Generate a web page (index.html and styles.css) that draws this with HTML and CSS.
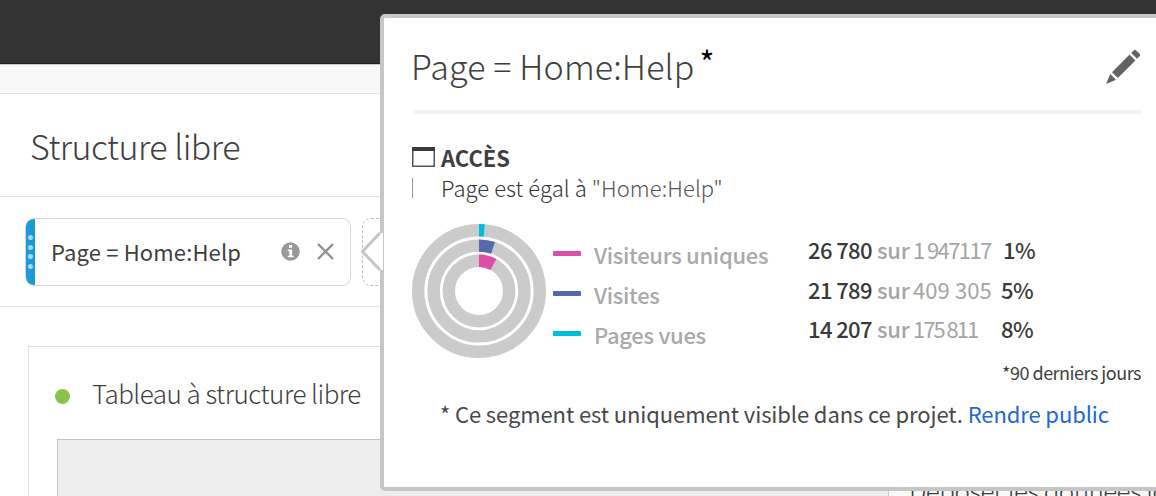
FILE: index.html
```html
<!DOCTYPE html>
<html lang="fr">
<head>
<meta charset="utf-8">
<title>Structure libre</title>
<link rel="stylesheet" href="styles.css">
</head>
<body>
<main class="page">
  <div class="topbar"></div>
  <div class="toolbar"></div>
  <header class="section-header"><h1 class="section-title">Structure libre</h1></header>
  <div class="segments">
    <div class="chip">
      <span class="chip-handle"><i></i><i></i><i></i><i></i></span>
      <span class="chip-label">Page = Home:Help</span>
      <svg class="chip-info" width="19" height="19" viewBox="0 0 19 19"><circle cx="9.5" cy="9.5" r="9.2" fill="#999"/><path d="M8 3h3.2v2.7H8zM6.7 7.4h4.5v6.3h1.5v1.6H6.7v-1.6h1.6V9H6.7z" fill="#fff"/></svg>
      <svg class="chip-close" width="17" height="17" viewBox="0 0 17 17"><path d="M1 1l15 15M16 1L1 16" stroke="#919191" stroke-width="2.4" fill="none"/></svg>
    </div>
    <div class="dropzone"></div>
  </div>
  <section class="panel">
    <div class="panel-head"><span class="status"></span><h2 class="panel-title">Tableau à structure libre</h2></div>
    <div class="table">
      <div class="table-corner"></div>
      <div class="table-drop">Déposer les données ici</div>
    </div>
  </section>

  <aside class="popover">
    <svg class="pointer" width="23" height="40" viewBox="0 0 23 40"><path d="M19 1L1.5 19.5 19 38h4V1z" fill="#fff"/><path d="M20 1L2.5 19.5 20 38" fill="none" stroke="#c6c6c6" stroke-width="3"/></svg>
    <div class="pop-head">
      <h3 class="pop-title">Page = Home:Help<sup class="star">*</sup></h3>
      <svg class="pencil" width="36" height="36" viewBox="0 0 36 36" fill="#636363"><path d="M1 35l4.3-10.1 5.8 5.8z"/><path d="M7 23.2L24.6 5.6l5.8 5.8L12.8 29z"/><path d="M26.2 4L29 1.2q1-1 2 0L34.8 5q1 1 0 2L32 9.8z"/></svg>
    </div>
    <div class="rule-head">
      <svg width="23" height="20" viewBox="0 0 23 20"><path d="M.75 2v17.2h21.5V2" fill="none" stroke="#555" stroke-width="1.5"/><path d="M0 0h23v4H0z" fill="#3b3b3b"/></svg>
      <span class="rule-name">ACCÈS</span>
    </div>
    <div class="rule-body"><span>Page est égal à <span class="value">"Home:Help"</span></span></div>
    <div class="stats">
      <svg class="rings" width="134" height="134" viewBox="-67 -67 134 134" fill="none" stroke-width="12.4">
        <g stroke="#cbcbcb"><circle r="60.8"/><circle r="45.4"/><circle r="30.2"/></g>
        <path d="M0-60.8A60.8 60.8 0 0 1 5.3-60.57" stroke="#00bedb"/>
        <path d="M0-45.4A45.4 45.4 0 0 1 14-43.2" stroke="#5569ad"/>
        <path d="M0-30.2A30.2 30.2 0 0 1 14.4-26.5" stroke="#dc4fa4"/>
      </svg>
      <div class="legend">
        <div class="item"><i class="swatch pink"></i><span>Visiteurs uniques</span></div>
        <div class="item"><i class="swatch blue"></i><span>Visites</span></div>
        <div class="item"><i class="swatch cyan"></i><span>Pages vues</span></div>
      </div>
      <div class="figures">
        <div class="figure"><b>26 780</b><span class="of">sur</span><span class="total tight">1 947117</span><b class="pct">1%</b></div>
        <div class="figure"><b>21 789</b><span class="of">sur</span><span class="total">409 305</span><b class="pct low">5%</b></div>
        <div class="figure"><b>14 207</b><span class="of">sur</span><span class="total snug">175 811</span><b class="pct low">8%</b></div>
      </div>
    </div>
    <div class="period">*90 derniers jours</div>
    <p class="notice"><span class="notice-text">* Ce segment est uniquement visible dans ce projet.</span><a class="link">Rendre public</a></p>
  </aside>
</main>
</body>
</html>
```
FILE: styles.css
```css
* { box-sizing: border-box; }
body { margin: 0; font-family: "Noto Sans CJK SC", "Noto Sans", sans-serif; color: #3f3f3f; background: #fff; }
h1, h2, h3, p { margin: 0; }
.page { position: relative; width: 1156px; height: 496px; overflow: hidden; display: flex; flex-direction: column; }
.page > * { flex-shrink: 0; }
.topbar { height: 64px; background: #333; border-bottom: 1px solid #222; }
.toolbar { height: 30px; background: #f8f8f8; border-top: 1px solid #c8c8c8; border-bottom: 1px solid #e0e0e0; }
.section-header { height: 103px; padding: 32px 30px 0; border-bottom: 1px solid #e3e3e3; }
.section-title { font-size: 34px; font-weight: 300; line-height: 40px; letter-spacing: -0.52px; }

.segments { height: 110px; padding: 21px 25px 0; display: flex; gap: 11px; border-bottom: 1px solid #e6e6e6; }
.chip { width: 326px; height: 68px; border: 1px solid #d5d5d5; border-radius: 9px; display: flex; align-items: center; overflow: hidden; }
.chip-handle { width: 9px; height: 68px; background: #1a9bd7; display: flex; flex-direction: column; align-items: center; justify-content: center; gap: 4.5px; }
.chip-handle i { width: 5px; height: 5px; border-radius: 50%; background: #a5d9f3; }
.chip-label { width: 229px; padding-left: 16px; margin-bottom: 3px; font-size: 22px; line-height: 30px; letter-spacing: 0.15px; white-space: nowrap; }
.chip-info { margin-left: 17px; margin-bottom: 2px; }
.chip-close { margin-left: 17px; margin-bottom: 2px; }
.dropzone { width: 60px; height: 68px; border: 1px dashed #bdbdbd; border-radius: 9px; }

.panel { margin: 39px 0 0 28px; height: 180px; border: 1px solid #dfdfdf; border-right: 0; }
.panel-head { height: 92px; padding: 3px 0 0 26px; display: flex; align-items: center; gap: 22px; }
.status { width: 15px; height: 15px; border-radius: 50%; background: #8bc34a; margin-top: 4px; }
.panel-title { margin-bottom: 4px; font-size: 26px; font-weight: 300; line-height: 36px; letter-spacing: -0.52px; white-space: nowrap; }
.table { margin-left: 28px; height: 80px; display: flex; border: 1px solid #c4c4c4; background: #ededed; }
.table-corner { width: 831px; flex-shrink: 0; border-right: 1px solid #ccc; }
.table-drop { flex: 1; padding: 32px 0 0 20px; background: #f9f9f9; font-size: 26px; font-weight: 300; line-height: 36px; letter-spacing: -0.6px; white-space: nowrap; }

.popover { position: absolute; left: 380px; top: 14px; width: 790px; height: 477px; padding: 0 0 0 28px; background: #fff; border: 4px solid #c6c6c6; border-radius: 5px; }
.pointer { position: absolute; left: -24px; top: 214px; }
.pop-head { width: 727px; height: 96px; border-bottom: 4px solid #f2f2f2; padding-top: 24px; display: flex; justify-content: space-between; margin-left: 2px; }
.pop-title { margin-left: -3px; font-size: 34px; font-weight: 300; line-height: 48px; letter-spacing: 0.15px; white-space: nowrap; display: flex; }
.star { font-size: 32px; font-weight: 400; color: #000; line-height: 38px; margin-left: 5px; }
.pencil { margin-top: 7px; }
.rule-head { margin-top: 28px; height: 30px; display: flex; align-items: center; gap: 6px; }
.rule-name { font-size: 22px; font-weight: 600; line-height: 30px; letter-spacing: 0; }
.rule-body { margin-top: 6px; height: 20px; border-left: 1px solid #999; padding-left: 28px; font-size: 22px; font-weight: 300; line-height: 18px; letter-spacing: 0.08px; color: #333; white-space: nowrap; }
.value { color: #555; }
.stats { margin-top: 26px; height: 134px; display: flex; }
.legend { width: 260px; padding: 10px 0 0 7px; font-size: 22px; font-weight: 500; color: #aaa; letter-spacing: -0.3px; }
.item { height: 40px; line-height: 40px; display: flex; align-items: center; gap: 13px; white-space: nowrap; }
.swatch { width: 28px; height: 5px; border-radius: 1px; margin-top: -1px; }
.pink { background: #dc4fa4; }
.blue { background: #5569ad; }
.cyan { background: #00bedb; }
.figures { padding-top: 6px; font-size: 22px; letter-spacing: -0.2px; }
.figure { height: 39.5px; line-height: 39.5px; display: grid; grid-template-columns: 66px 34px 85px 40px; column-gap: 3px; white-space: nowrap; color: #a5a5a5; }
.figure b { font-weight: 500; color: #3a3a3a; text-align: right; letter-spacing: -0.6px; }
.figure .pct { text-align: left; padding-left: 3px; }
.figure .low { padding-left: 1px; }
.of { font-weight: 500; padding-left: 2px; }
.total { font-weight: 400; letter-spacing: 0.1px; padding-left: 1px; }
.tight { letter-spacing: -1.6px; }
.snug { letter-spacing: -2px; }
.period { width: 729px; margin-top: 1px; text-align: right; font-size: 18px; line-height: 26px; letter-spacing: -0.5px; }
.notice { margin: 12px 0 0 28px; display: flex; gap: 5px; font-size: 22px; line-height: 32px; letter-spacing: -0.1px; white-space: nowrap; color: #484848; }
.link { color: #2268d1; }
```
